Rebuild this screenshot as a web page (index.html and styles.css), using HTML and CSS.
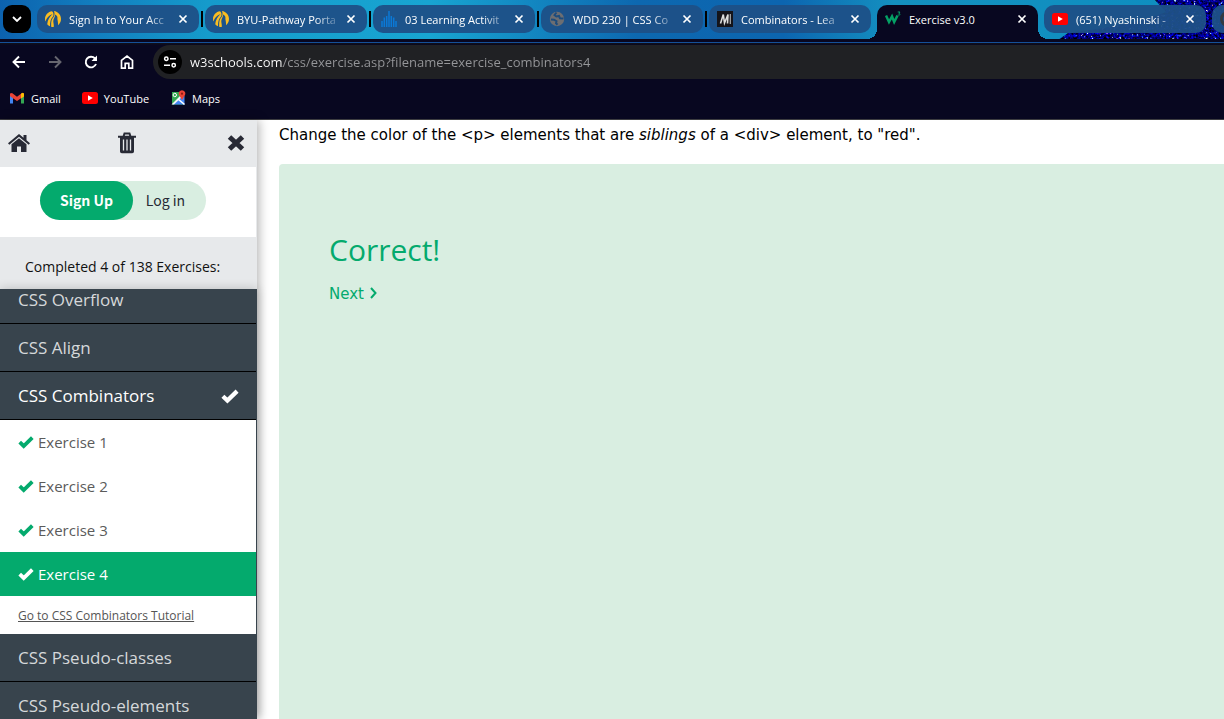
FILE: index.html
```html
<!DOCTYPE html>
<html lang="en">
<head>
<meta charset="utf-8">
<title>Exercise v3.0</title>
<link rel="stylesheet" href="styles.css">
</head>
<body>
<svg class="defs" aria-hidden="true">
  <symbol id="close" viewBox="0 0 10 10"><path d="M1.500 1.500l7 7M8.500 1.500l-7 7" stroke="currentColor" stroke-width="1.700"/></symbol>
  <symbol id="check" viewBox="0 0 16 14"><path d="M1.700 7.200L5.700 11L14.300 2.700" fill="none" stroke="currentColor" stroke-width="3.800"/></symbol>
  <symbol id="byu" viewBox="0 0 16 16"><path d="M7 .2C3 .7 0 4 0 8c0 1 .2 1.800.5 2.500C1.500 7 3.800 4.500 7.500 3C5 5.500 2.600 8.500 2.200 13.200c.8 1 1.700 1.600 2.800 2.100C5 11 5.500 8 8 5.500C9 4 8.500 1 7 .2Z" fill="#f9bd22"/><path d="M9 .1C13 .6 16 4 16 8c0 2.600-1.200 4.900-3 6.300c.3-3.800-.8-5.300-.6-7.300c.2-2-1-3-2.400-3.600c.4 2.600-1.600 4.600-1.700 6.500c-.1 2 .8 3.600.4 6.100c-.9.100-1.700 0-2.500-.3C6 11.500 6.300 8.700 8.200 6.500C9.800 4.500 9.800 2 9 .1Z" fill="#f9bd22"/></symbol>
  <symbol id="yt" viewBox="0 0 16 12"><rect width="16" height="12" rx="2.500" fill="#f00"/><path d="M6 3.200v5.600L10.800 6z" fill="#fff"/></symbol>
  <symbol id="globe" viewBox="0 0 16 16"><circle cx="8" cy="8" r="7.200" fill="#6d6e72"/><path d="M2 8.500l3 .2 2.500 1.500-.5 2 1.500 1.600M7.500 1.500L5.500 4l1.800 1.500L10 5l1 2.300 3.500.2" fill="none" stroke="#1d4c7d" stroke-width="2"/></symbol>
</svg>

<header class="browser">
  <nav class="tabstrip" aria-label="Tabs">
    <svg class="galaxy" viewBox="0 0 180 40" aria-hidden="true">
      <filter id="specks" x="0" y="0" width="100%" height="100%" color-interpolation-filters="sRGB">
        <feTurbulence type="fractalNoise" baseFrequency="0.4" numOctaves="3" seed="7"/>
        <feColorMatrix values="5 2 0 0 -4.300  4 3 0 0 -4.200  1 1 1.500 0 -1.250  0 0 0 0 1"/>
        <feComposite in2="SourceGraphic" operator="in"/>
      </filter>
      <path d="M111 0H180V40H14L24 33L60 28L100 20L122 12Z" filter="url(#specks)"/>
    </svg>
    <button class="tab-search" aria-label="Search tabs"><svg width="10" height="6" viewBox="0 0 10 6"><path d="M1 1l4 4 4-4" fill="none" stroke="#fff" stroke-width="1.800"/></svg></button>
    <div class="tab split"><svg class="fav"><use href="#byu"/></svg><span class="tab-title">Sign In to Your Acc</span><button class="tab-close" aria-label="Close tab"><svg><use href="#close"/></svg></button></div>
    <div class="tab split"><svg class="fav"><use href="#byu"/></svg><span class="tab-title">BYU-Pathway Porta</span><button class="tab-close" aria-label="Close tab"><svg><use href="#close"/></svg></button></div>
    <div class="tab split"><svg class="fav" viewBox="0 0 16 16"><path d="M1 16V10M3.300 16V6.500M5.700 16V5M8 16V0M10.300 16V5M12.700 16V6.500M15 16V10" stroke="#0b79d6" stroke-width="1.500"/></svg><span class="tab-title">03 Learning Activit</span><button class="tab-close" aria-label="Close tab"><svg><use href="#close"/></svg></button></div>
    <div class="tab split"><svg class="fav"><use href="#globe"/></svg><span class="tab-title">WDD 230 | CSS Co</span><button class="tab-close" aria-label="Close tab"><svg><use href="#close"/></svg></button></div>
    <div class="tab"><svg class="fav" viewBox="0 0 16 16"><rect width="16" height="16" fill="#15141a"/><path d="M3.500 12.500L6.300 3.500L7.500 12L11 3.500L10.500 12.500" fill="none" stroke="#ddd" stroke-width="1.600"/><path d="M13.300 3v10" stroke="#aaa" stroke-width="1.200"/></svg><span class="tab-title">Combinators - Lea</span><button class="tab-close" aria-label="Close tab"><svg><use href="#close"/></svg></button></div>
    <div class="tab active"><svg class="fav" viewBox="0 0 16 16"><path d="M1 4.500L4 11L7 5.500L9.200 11L12.500 4.500" fill="none" stroke="#04a065" stroke-width="2.500"/><path d="M12.700 1h2.300l-1.100 1.400c2 .3 1.200 2.300-1.100 1.500" fill="none" stroke="#04a065"/></svg><span class="tab-title">Exercise v3.0</span><button class="tab-close" aria-label="Close tab"><svg><use href="#close"/></svg></button></div>
    <div class="tab"><svg class="fav"><use href="#yt"/></svg><span class="tab-title">(651) Nyashinski -</span><button class="tab-close" aria-label="Close tab"><svg><use href="#close"/></svg></button></div>
    <div class="tab"><svg class="fav" viewBox="0 0 16 16"><circle cx="8" cy="8" r="6.500" fill="none" stroke="#333a42" stroke-width="3"/></svg></div>
  </nav>

  <div class="toolbar">
    <div class="tools">
      <button class="tool" aria-label="Back"><svg viewBox="0 0 16 16"><path d="M14 8H3M8 2.500L2.500 8L8 13.500" fill="none" stroke="#fff" stroke-width="1.900"/></svg></button>
      <button class="tool" aria-label="Forward"><svg viewBox="0 0 16 16"><path d="M2 8h11M8 2.500L13.500 8L8 13.500" fill="none" stroke="#66666f" stroke-width="1.900"/></svg></button>
      <button class="tool" aria-label="Reload"><svg viewBox="0 0 16 16"><path d="M13 10A5.300 5.300 0 1 1 12 4.500L13.300 6" fill="none" stroke="#fff" stroke-width="1.900"/><path d="M14 1.500V7H8.500Z" fill="#fff"/></svg></button>
      <button class="tool" aria-label="Home"><svg viewBox="0 0 16 16"><path d="M2.500 14.200V6.300L8 2l5.500 4.300v7.900H9.800V9.300H6.200v4.900Z" fill="none" stroke="#fff" stroke-width="1.700"/></svg></button>
    </div>
    <div class="omnibox">
      <button class="site-info" aria-label="View site information"><svg width="14" height="14" viewBox="0 0 14 14" fill="none" stroke="#fff" stroke-width="1.500"><circle cx="3.300" cy="3.700" r="1.700"/><path d="M7 3.700h6M1 10.300h6"/><circle cx="10.700" cy="10.300" r="1.700"/></svg></button>
      <input class="url" type="text" aria-label="Address" value="w3schools.com/css/exercise.asp?filename=exercise_combinators4">
    </div>
  </div>

  <nav class="bookmarks" aria-label="Bookmarks">
    <a href="#gmail"><svg viewBox="0 0 16 16"><path d="M1 4v9.500h3V7Z" fill="#4285f4"/><path d="M15 4v9.500h-3V7Z" fill="#34a853"/><path d="M1 3.500L3 3L8 6.700L13 3l2 .5v2.700L8 11L1 6.200Z" fill="#ea4335"/><path d="M12 3.800l1.500-1 1.500.7v3l-3 2Z" fill="#fbbc04"/></svg>Gmail</a>
    <a href="#youtube"><svg><use href="#yt"/></svg>YouTube</a>
    <a href="#maps"><svg viewBox="0 0 16 16"><path d="M2 2h12v12.500H2Z" fill="#34a853"/><path d="M3 14.500L13 4l1.500 2v8.500Z" fill="#4285f4"/><path d="M1.500 14.500L13 3l1.500 1.500-10.500 10Z" fill="#f5f5f5"/><path d="M8 9l6.500 5.500" stroke="#fff" stroke-width="1.600"/><circle cx="4.800" cy="5" r="1.700" fill="none" stroke="#fff"/><path d="M12 10L9 5a3.300 3.300 0 1 1 6 0Z" fill="#ea4335"/><circle cx="12" cy="3.700" r="1.100" fill="#8c1c13"/></svg>Maps</a>
  </nav>
</header>

<div class="page">
  <aside class="sidebar">
    <div class="side-tools">
      <a href="#home" aria-label="Home"><svg width="22" height="18" viewBox="0 0 22 18" fill="#282a35"><path d="M11 0L0 9.200l1.300 1.500L11 2.800l9.700 7.900L22 9.200l-3.500-3V1h-3v2.700Z"/><path d="M11 4.200L3.500 10.300V18H9v-5.500h4V18h5.500v-7.700Z"/></svg></a>
      <button aria-label="Reset progress"><svg width="18" height="22" viewBox="0 0 18 22"><path d="M0 4.700h18M5.500 4.500L6.500 1.500h5l1 3" fill="none" stroke="#282a35" stroke-width="2"/><path d="M2 5h14v14.500a1.800 1.800 0 0 1-1.800 1.800H3.800A1.800 1.800 0 0 1 2 19.500Z" fill="#282a35"/><path d="M5.500 7.500v11M9 7.500v11M12.500 7.500v11" stroke="#e7e9eb" stroke-width="1.300"/></svg></button>
      <button class="close-menu" aria-label="Close menu"><svg width="18" height="16" viewBox="0 0 18 16"><path d="M2.500 2L15.500 14M15.500 2L2.500 14" stroke="#282a35" stroke-width="5"/></svg></button>
    </div>
    <div class="account"><div class="account-pill"><a class="signup" href="#signup">Sign Up</a><a class="login" href="#login">Log in</a></div></div>
    <p class="progress">Completed 4 of 138 Exercises:</p>
    <nav class="menu" aria-label="Exercises">
      <div class="menu-list">
        <button class="category">CSS Overflow</button>
        <button class="category">CSS Align</button>
        <button class="category open">CSS Combinators<svg><use href="#check"/></svg></button>
        <a class="exercise" href="#e1"><svg><use href="#check"/></svg>Exercise 1</a>
        <a class="exercise" href="#e2"><svg><use href="#check"/></svg>Exercise 2</a>
        <a class="exercise" href="#e3"><svg><use href="#check"/></svg>Exercise 3</a>
        <a class="exercise current" href="#e4"><svg><use href="#check"/></svg>Exercise 4</a>
        <a class="tutorial" href="#tutorial">Go to CSS Combinators Tutorial</a>
        <button class="category">CSS Pseudo-classes</button>
        <button class="category">CSS Pseudo-elements</button>
      </div>
    </nav>
  </aside>
  <main class="content">
    <p class="task">Change the color of the &lt;p&gt; elements that are <em>siblings</em> of a &lt;div&gt; element, to "red".</p>
    <section class="result">
      <h1>Correct!</h1>
      <a class="next" href="#next">Next <svg width="8" height="12" viewBox="0 0 8 12"><path d="M2 1L6.500 6L2 11" fill="none" stroke="#04aa6d" stroke-width="2"/></svg></a>
    </section>
  </main>
</div>
</body>
</html>
```

FILE: styles.css
```css
* { box-sizing: border-box; }
body {
  margin: 0;
  height: 100vh;
  display: flex;
  flex-direction: column;
  overflow: hidden;
  background: #fff;
  font-family: "Open Sans", "Noto Sans", sans-serif;
}
button {
  margin: 0;
  padding: 0;
  border: 0;
  background: none;
  color: inherit;
  font: inherit;
}
a { color: inherit; text-decoration: none; }
.defs { position: absolute; width: 0; height: 0; }

/* Browser frame */
.browser {
  flex: none;
  background: #080720;
  border-bottom: 1px solid #3c3c40;
  color: #fff;
  font-size: 11px;
}
.tabstrip {
  position: relative;
  display: flex;
  gap: 6px;
  height: 39px;
  padding: 5px 0 6px 3px;
  overflow: hidden;
  background: linear-gradient(90deg, #0c62ae 0, #127fc0 8%, #159bcb 17%, #18a5d2 35%, #0d68b0 52%, #0c65b0 64%, #1490c0 73%, #0d8ec0 100%);
}
.galaxy { position: absolute; right: 0; top: 0; width: 180px; height: 40px; }
.tab-search {
  flex: none;
  width: 28px;
  height: 28px;
  border-radius: 9px;
  background: #000;
  display: grid;
  place-items: center;
}
.tab {
  position: relative;
  flex: none;
  width: 162px;
  height: 28px;
  padding: 0 10px 0 8px;
  display: flex;
  align-items: center;
  gap: 8px;
  border-radius: 10px;
  background: #1e5087f2;
}
.split::after {
  content: "";
  position: absolute;
  right: -4px;
  top: 6px;
  width: 2px;
  height: 16px;
  background: #000;
}
.tab.active {
  width: 161px;
  height: 34px;
  padding-bottom: 6px;
  border-radius: 10px 10px 0 0;
  background: #080720;
}
.tab.active::before,
.tab.active::after {
  content: "";
  position: absolute;
  bottom: 0;
  width: 10px;
  height: 10px;
}
.tab.active::before { left: -10px; background: radial-gradient(circle at 0 0, transparent 10px, #080720 10px); }
.tab.active::after { right: -10px; background: radial-gradient(circle at 100% 0, transparent 10px, #080720 10px); }
.fav { flex: none; width: 16px; height: 16px; }
.tab-title {
  flex: 1;
  min-width: 0;
  white-space: nowrap;
  -webkit-mask-image: linear-gradient(90deg, #000 78%, #0003);
  mask-image: linear-gradient(90deg, #000 78%, #0003);
}
.active .tab-title { -webkit-mask-image: none; mask-image: none; }
.tab-close { flex: none; width: 12px; height: 12px; display: grid; place-items: center; }
.tab-close svg { width: 10px; height: 10px; }

.toolbar {
  display: flex;
  align-items: center;
  gap: 18px;
  height: 40px;
  padding: 6px 0 0 11px;
  background: linear-gradient(#080720 3px, #155099 3px, #155099 4px, #111118 4px, #080720 6px);
}
.tools { display: flex; gap: 20px; }
.tool { width: 16px; height: 16px; flex: none; }
.tool svg { display: block; width: 16px; height: 16px; }
.omnibox {
  flex: 1;
  height: 34px;
  display: flex;
  align-items: center;
  gap: 8px;
  padding-left: 5px;
  border-radius: 17px 0 0 17px;
  background: #202124;
}
.site-info {
  flex: none;
  width: 24px;
  height: 24px;
  border-radius: 50%;
  background: #000;
  display: grid;
  place-items: center;
}
.url {
  flex: 1;
  min-width: 0;
  height: 24px;
  padding: 0;
  border: 0;
  outline: 0;
  font: 13px "Open Sans", "Noto Sans", sans-serif;
  color: transparent;
  background: linear-gradient(90deg, #fff 93px, #96979a 93px);
  -webkit-background-clip: text;
  background-clip: text;
}
.bookmarks { display: flex; align-items: center; gap: 21px; height: 40px; padding: 0 0 2px 9px; }
.bookmarks a { display: flex; align-items: center; gap: 6px; }
.bookmarks svg { width: 16px; height: 16px; }

/* Page */
.page { flex: 1; min-height: 0; display: flex; }
.sidebar {
  flex: none;
  width: 257px;
  display: flex;
  flex-direction: column;
  background: #e7e9eb;
  box-shadow: 2px 0 10px #0000004d;
}
.side-tools {
  flex: none;
  height: 47px;
  padding: 0 12px 2px 8px;
  display: grid;
  grid-template-columns: 1fr auto 1fr;
  align-items: center;
}
.close-menu { justify-self: end; }
.side-tools svg { display: block; }
.account {
  flex: none;
  height: 70px;
  margin-right: 1px;
  padding: 14px 40px;
  background: #fff;
  font-family: "Noto Sans CJK SC", sans-serif;
  font-size: 14px;
}
.account-pill {
  width: 166px;
  height: 39px;
  display: flex;
  border-radius: 20px;
  background: #d9eee1;
  line-height: 38px;
  text-align: center;
}
.signup { width: 93px; border-radius: 20px; background: #04aa6d; color: #fff; font-weight: 700; }
.login { flex: 1; padding-right: 8px; color: #282a35; }
.progress {
  flex: none;
  height: 52px;
  margin: 0;
  padding: 8px 0 0 25px;
  line-height: 44px;
  font-size: 14px;
  color: #111;
}
.menu {
  flex: 1;
  min-height: 0;
  overflow: hidden;
  background: #fff;
  border-right: 1px solid #38444d;
  box-shadow: 0 0 10px #00000033;
}
.menu-list { display: flex; flex-direction: column; margin-top: -13px; }
.category {
  flex: none;
  height: 48px;
  padding: 0 17px 0 18px;
  display: flex;
  align-items: center;
  justify-content: space-between;
  border-bottom: 1px solid #000;
  background: #38444d;
  color: #d5d8da;
  font-size: 17px;
}
.category.open { color: #fff; }
.category svg { width: 18px; height: 16px; }
.exercise {
  flex: none;
  height: 44px;
  padding-left: 18px;
  display: flex;
  align-items: center;
  gap: 4px;
  font-size: 15px;
  color: #5b5b5b;
}
.exercise svg { width: 16px; height: 14px; color: #04aa6d; }
.exercise.current { background: #04aa6d; color: #fff; }
.exercise.current svg { color: #fff; }
.tutorial {
  flex: none;
  height: 38px;
  padding-left: 18px;
  line-height: 40px;
  font-size: 12px;
  color: #555;
  text-decoration: underline;
}
.content {
  flex: 1;
  min-width: 0;
  display: flex;
  flex-direction: column;
  padding: 4px 0 0 22px;
  font-family: "DejaVu Sans", Verdana, sans-serif;
  font-size: 15px;
}
.task { margin: 0 0 18px; line-height: 22px; color: #000; }
.result {
  flex: 1;
  padding: 62px 50px;
  border-radius: 4px 0 0 0;
  background: #d9eee1;
  color: #04aa6d;
}
.result h1 {
  margin: 0 0 10px;
  font: 400 30px/48px "Open Sans", "Noto Sans", sans-serif;
}
.next { line-height: 20px; }
```
